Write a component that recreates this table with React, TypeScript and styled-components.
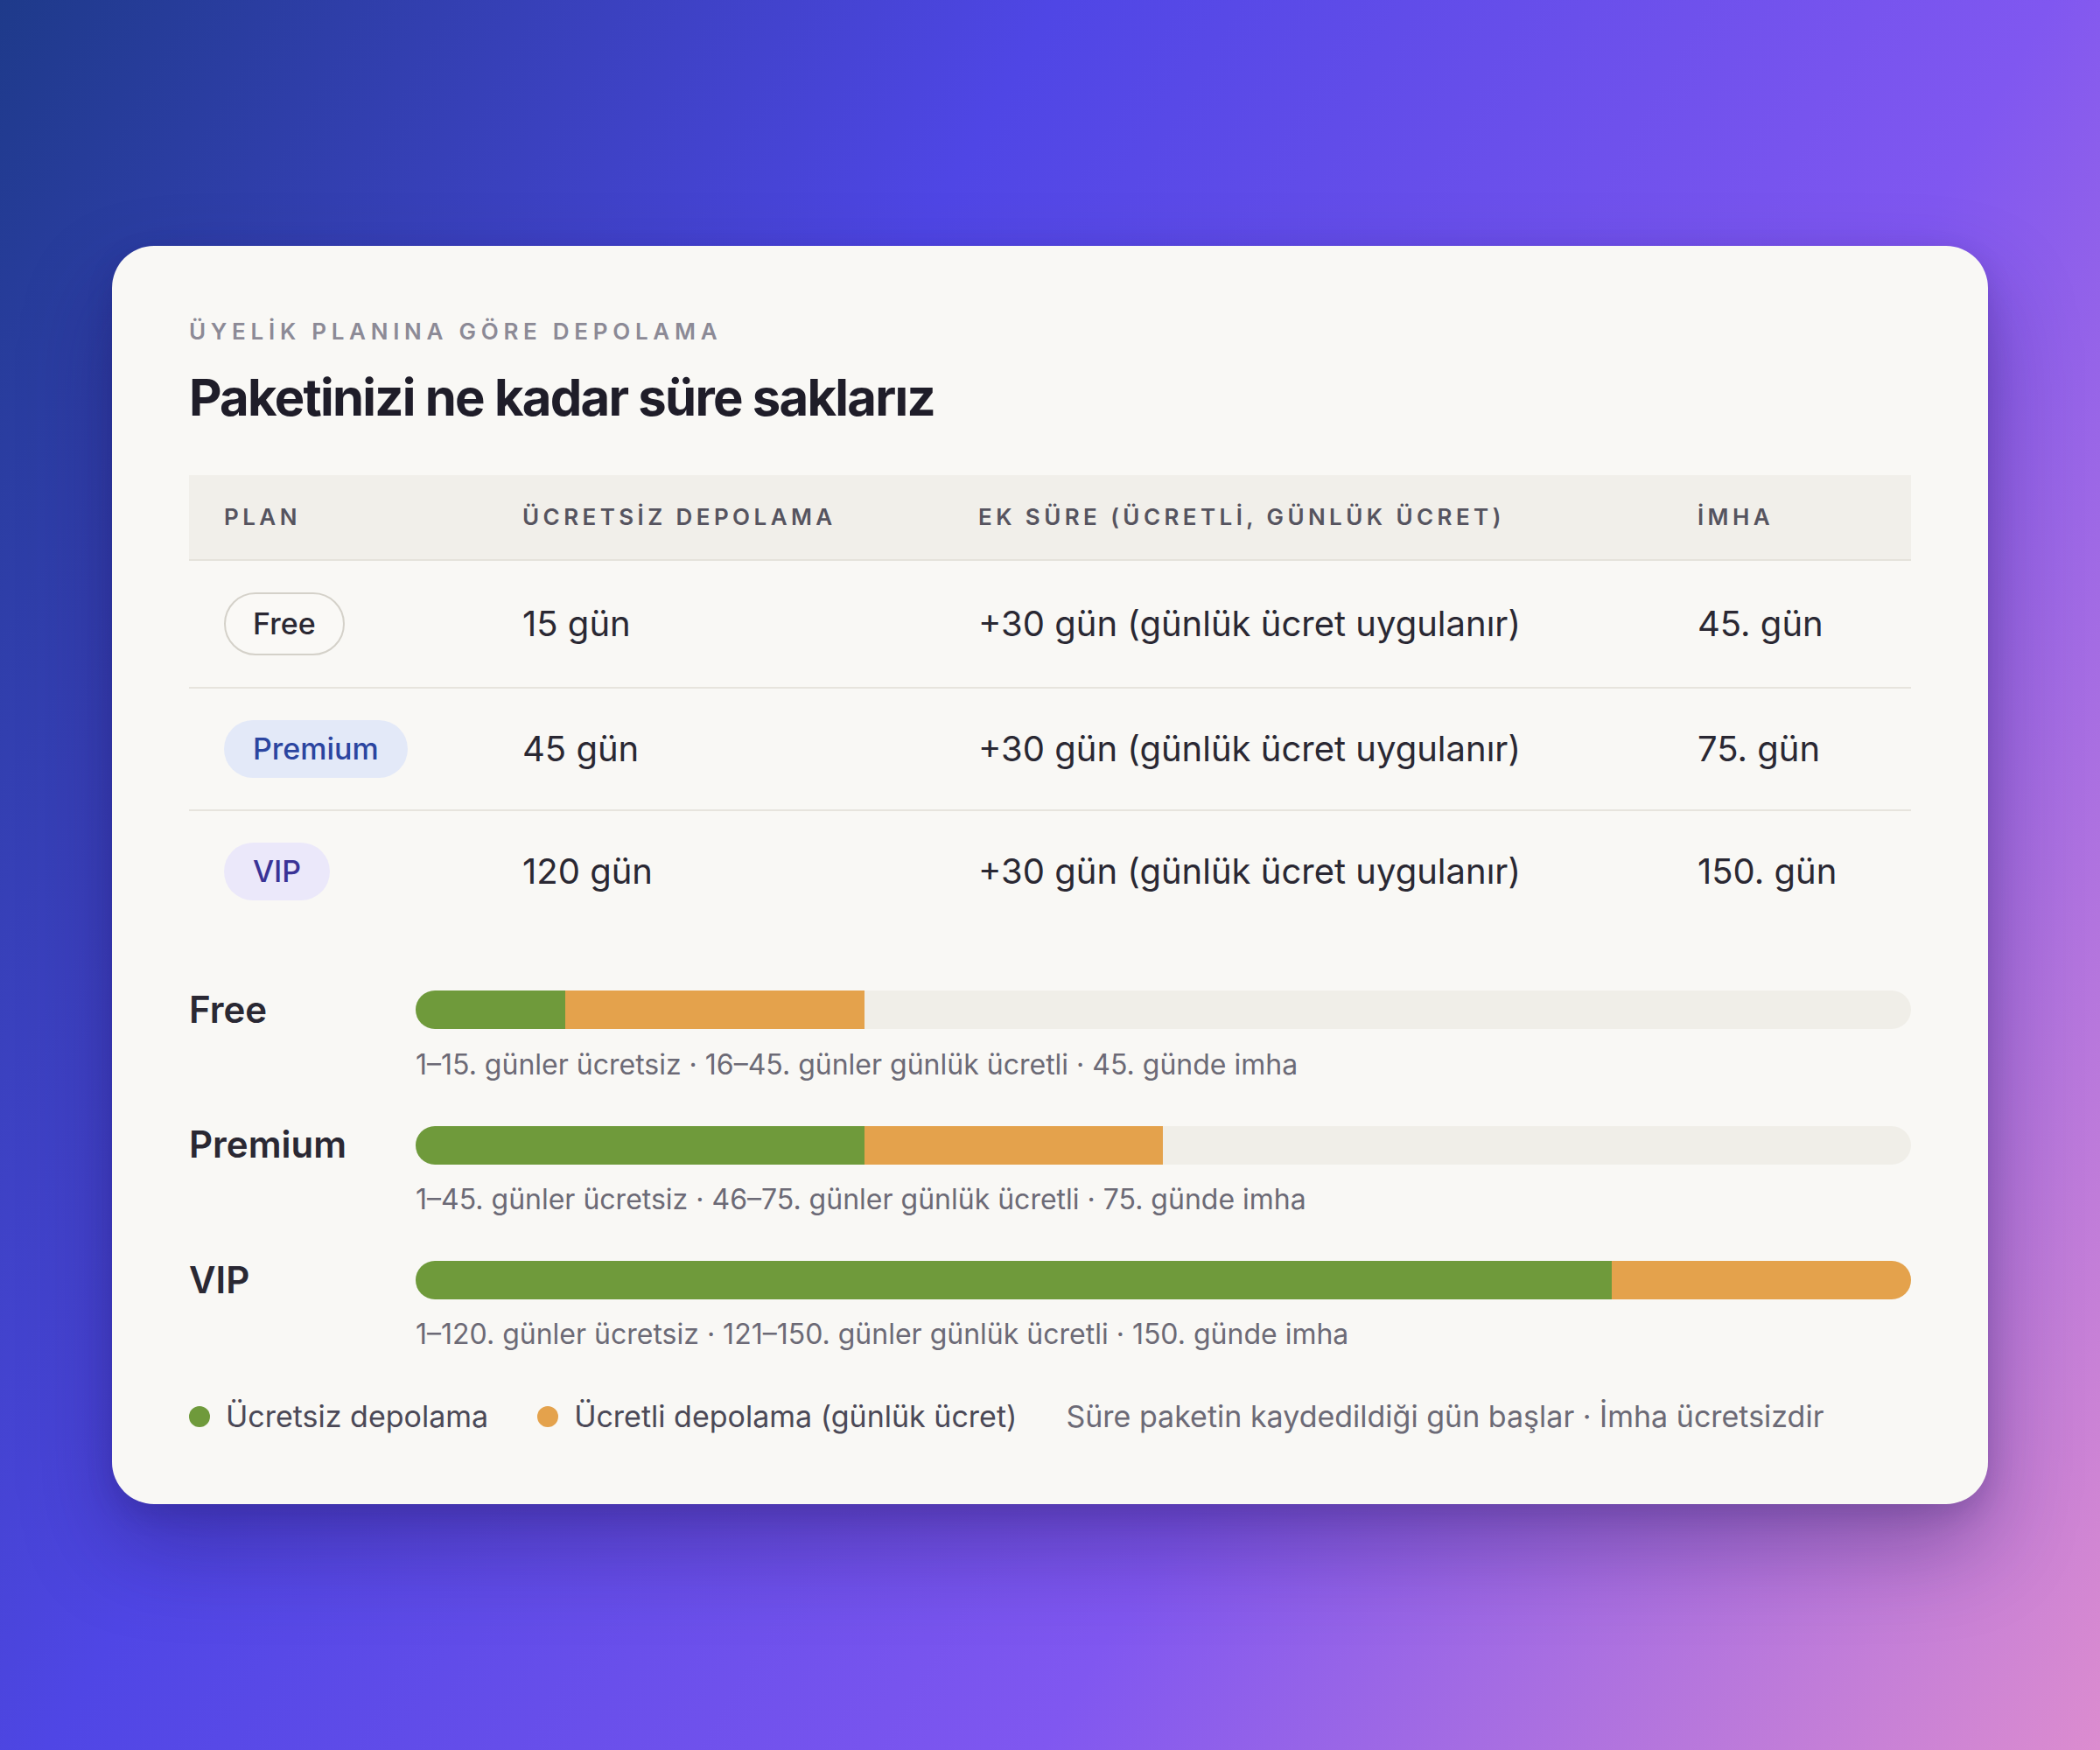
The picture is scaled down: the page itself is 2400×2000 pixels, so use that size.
import React from "react";
import styled, { createGlobalStyle } from "styled-components";

const GlobalStyle = createGlobalStyle`
  html, body { margin: 0; padding: 0; }
  body {
    font-family: Inter, "Noto Sans", "Liberation Sans", sans-serif;
    -webkit-font-smoothing: antialiased;
  }
  * { box-sizing: border-box; }
`;

const Page = styled.div`
  min-height: 100vh;
  display: flex;
  align-items: center;
  justify-content: center;
  background: linear-gradient(120deg, #1e3a8a 0%, #4f46e5 34%, #8057f0 66%, #dc8ccf 100%);
`;

const Card = styled.section`
  width: 2144px;
  background: #f9f8f5;
  border-radius: 48px;
  padding: 82px 88px 77px;
  box-shadow: 0 50px 100px rgba(30, 16, 80, 0.35), 0 10px 30px rgba(30, 16, 80, 0.15);
`;

const Eyebrow = styled.div`
  font-size: 26px;
  line-height: 1.2;
  font-weight: 600;
  letter-spacing: 0.22em;
  color: #8c8a96;
`;

const Title = styled.h1`
  margin: 25px 0 0;
  font-size: 58px;
  line-height: 1.2;
  font-weight: 700;
  letter-spacing: -0.03em;
  color: #1f1d29;
`;

const Table = styled.div`
  margin-top: 54px;
  display: grid;
  grid-template-columns: 341px 521px 822px 1fr;
`;

const HeadCell = styled.div`
  background: #f1efea;
  border-bottom: 2px solid #e5e2db;
  padding: 32px 40px;
  font-size: 26px;
  line-height: 32px;
  font-weight: 600;
  letter-spacing: 0.17em;
  color: #56545f;
  white-space: nowrap;
`;

const Cell = styled.div<{ $last?: boolean }>`
  display: flex;
  align-items: center;
  padding: 36px 40px;
  border-bottom: ${(p) => (p.$last ? "none" : "2px solid #e7e4dd")};
  font-size: 40px;
  line-height: 1.4;
  color: #2a2833;
  white-space: nowrap;
`;

type Tone = "free" | "premium" | "vip";

const toneStyles: Record<Tone, { bg: string; fg: string }> = {
  free: { bg: "#faf9f6", fg: "#2a2833" },
  premium: { bg: "#e3e9f8", fg: "#2b45a0" },
  vip: { bg: "#ebe8fa", fg: "#3a3396" },
};

const Badge = styled.span<{ $tone: Tone }>`
  display: inline-flex;
  align-items: center;
  height: ${(p) => (p.$tone === "free" ? "72px" : "66px")};
  padding: 0 ${(p) => (p.$tone === "free" ? "31px" : "33px")};
  border-radius: 999px;
  border: ${(p) => (p.$tone === "free" ? "2px solid #d4d1c9" : "none")};
  background: ${(p) => toneStyles[p.$tone].bg};
  color: ${(p) => toneStyles[p.$tone].fg};
  font-size: 34px;
  font-weight: 500;
`;

const Bars = styled.div`
  margin-top: 64px;
  display: flex;
  flex-direction: column;
  gap: 44px;
`;

const BarRow = styled.div`
  display: grid;
  grid-template-columns: 219px 1fr;
  column-gap: 40px;
  row-gap: 15px;
  align-items: center;
`;

const BarLabel = styled.div`
  font-size: 42px;
  line-height: 1.2;
  font-weight: 600;
  color: #2a2833;
`;

const Track = styled.div`
  height: 44px;
  border-radius: 22px;
  background: #f0eee8;
  overflow: hidden;
  display: flex;
`;

const Segment = styled.div<{ $kind: "free" | "paid" }>`
  height: 100%;
  background: ${(p) => (p.$kind === "free" ? "#6f9a3b" : "#e4a24c")};
`;

const Caption = styled.div`
  grid-column: 2;
  font-size: 32px;
  line-height: 1.4;
  color: #6c6a76;
`;

const Legend = styled.div`
  margin-top: 48px;
  display: flex;
  align-items: center;
  gap: 56px;
  font-size: 34px;
  line-height: 1.35;
`;

const LegendItem = styled.div`
  display: flex;
  align-items: center;
  gap: 18px;
  color: #4b4957;
`;

const Dot = styled.span<{ $color: string }>`
  width: 24px;
  height: 24px;
  border-radius: 50%;
  background: ${(p) => p.$color};
  flex: none;
`;

const Note = styled.div`
  color: #6c6a76;
`;

const MAX_DAYS = 150;

const plans: {
  tone: Tone;
  name: string;
  free: number;
  end: number;
  caption: string;
}[] = [
  {
    tone: "free",
    name: "Free",
    free: 15,
    end: 45,
    caption: "1–15. günler ücretsiz · 16–45. günler günlük ücretli · 45. günde imha",
  },
  {
    tone: "premium",
    name: "Premium",
    free: 45,
    end: 75,
    caption: "1–45. günler ücretsiz · 46–75. günler günlük ücretli · 75. günde imha",
  },
  {
    tone: "vip",
    name: "VIP",
    free: 120,
    end: 150,
    caption: "1–120. günler ücretsiz · 121–150. günler günlük ücretli · 150. günde imha",
  },
];

export default function App() {
  return (
    <>
      <GlobalStyle />
      <Page>
        <Card>
          <Eyebrow>ÜYELİK PLANINA GÖRE DEPOLAMA</Eyebrow>
          <Title>Paketinizi ne kadar süre saklarız</Title>

          <Table>
            <HeadCell>PLAN</HeadCell>
            <HeadCell>ÜCRETSİZ DEPOLAMA</HeadCell>
            <HeadCell>EK SÜRE (ÜCRETLİ, GÜNLÜK ÜCRET)</HeadCell>
            <HeadCell>İMHA</HeadCell>
            {plans.map((p, i) => {
              const last = i === plans.length - 1;
              return (
                <React.Fragment key={p.name}>
                  <Cell $last={last}>
                    <Badge $tone={p.tone}>{p.name}</Badge>
                  </Cell>
                  <Cell $last={last}>{p.free} gün</Cell>
                  <Cell $last={last}>+30 gün (günlük ücret uygulanır)</Cell>
                  <Cell $last={last}>{p.end}. gün</Cell>
                </React.Fragment>
              );
            })}
          </Table>

          <Bars>
            {plans.map((p) => (
              <BarRow key={p.name}>
                <BarLabel>{p.name}</BarLabel>
                <Track>
                  <Segment $kind="free" style={{ width: `${(p.free / MAX_DAYS) * 100}%` }} />
                  <Segment
                    $kind="paid"
                    style={{ width: `${((p.end - p.free) / MAX_DAYS) * 100}%` }}
                  />
                </Track>
                <Caption>{p.caption}</Caption>
              </BarRow>
            ))}
          </Bars>

          <Legend>
            <LegendItem>
              <Dot $color="#6f9a3b" />
              Ücretsiz depolama
            </LegendItem>
            <LegendItem>
              <Dot $color="#e4a24c" />
              Ücretli depolama (günlük ücret)
            </LegendItem>
            <Note>Süre paketin kaydedildiği gün başlar · İmha ücretsizdir</Note>
          </Legend>
        </Card>
      </Page>
    </>
  );
}
